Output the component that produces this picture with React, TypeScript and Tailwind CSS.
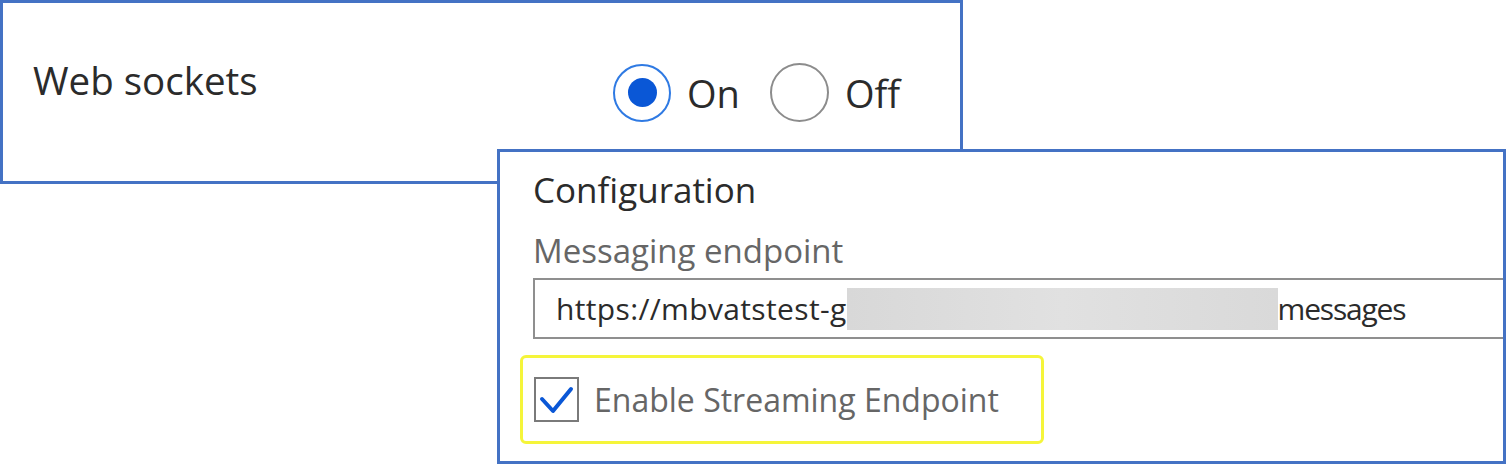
import React from "react";

const font = { fontFamily: '"Open Sans", "Noto Sans", sans-serif' };

function Radio({ checked, label }: { checked: boolean; label: string }) {
  return (
    <div className="flex items-center gap-[16px]">
      {checked ? (
        <div className="flex h-[58px] w-[58px] items-center justify-center rounded-full border-[2.5px] border-[#2f7ae3]">
          <div className="h-[29px] w-[29px] rounded-full bg-[#0a57d6]" />
        </div>
      ) : (
        <div className="h-[59px] w-[59px] rounded-full border-[2px] border-[#8c8c8c]" />
      )}
      <span className="text-[38px] leading-none text-[#2b2b2b]">{label}</span>
    </div>
  );
}

export default function App() {
  return (
    <div className="relative h-[464px] w-[1506px] overflow-hidden bg-white" style={font}>
      {/* Web sockets setting */}
      <div className="flex h-[184px] w-[963px] items-start border-[3px] border-[#4472c4] pl-[30px]">
        <div className="w-[580px] pt-[58px]">
          <span className="text-[38.5px] leading-none text-[#2b2b2b]">Web sockets</span>
        </div>
        <div className="flex items-center gap-[30px] pt-[60px]">
          <Radio checked label="On" />
          <Radio checked={false} label="Off" />
        </div>
      </div>

      {/* Configuration panel, laid over the settings row */}
      <div className="absolute left-[497px] top-[149px] h-[315px] w-[1009px] overflow-hidden border-[3px] border-[#4472c4] bg-white">
        <div className="flex flex-col pl-[33px] pt-[20px]">
          <span className="text-[35px] leading-none text-[#2b2b2b]">Configuration</span>
          <span className="mt-[27px] text-[33px] leading-none text-[#666666]">Messaging endpoint</span>
          <div className="mt-[11px] flex h-[61px] w-[1000px] items-center border-2 border-[#8f8f8f] pl-[21px]">
            <span className="text-[30px] leading-none tracking-[0.35px] text-[#2b2b2b]">https://mbvatstest-g</span>
            <div className="h-[42px] w-[431px] shrink-0 bg-linear-to-r from-[#d8d8d8] via-[#e1e1e1] to-[#d9d9d9]" />
            <span className="text-[30px] leading-none tracking-[-1.2px] text-[#2b2b2b]">messages</span>
          </div>
        </div>
        <div className="ml-[20px] mt-[16px] flex h-[89px] w-[524px] items-center gap-[15px] rounded-[6px] border-[3px] border-[#f5f53a] pl-[11px]">
          <div className="flex h-[45px] w-[45px] items-center justify-center border-2 border-[#7a7a7a]">
            <svg width="45" height="45" viewBox="0 0 45 45" className="-m-[2px]">
              <polyline
                points="8,22 19,34 37,12"
                fill="none"
                stroke="#0a57d6"
                strokeWidth="4"
                strokeLinecap="round"
                strokeLinejoin="round"
              />
            </svg>
          </div>
          <span className="text-[32px] leading-none text-[#666666]">Enable Streaming Endpoint</span>
        </div>
      </div>
    </div>
  );
}
